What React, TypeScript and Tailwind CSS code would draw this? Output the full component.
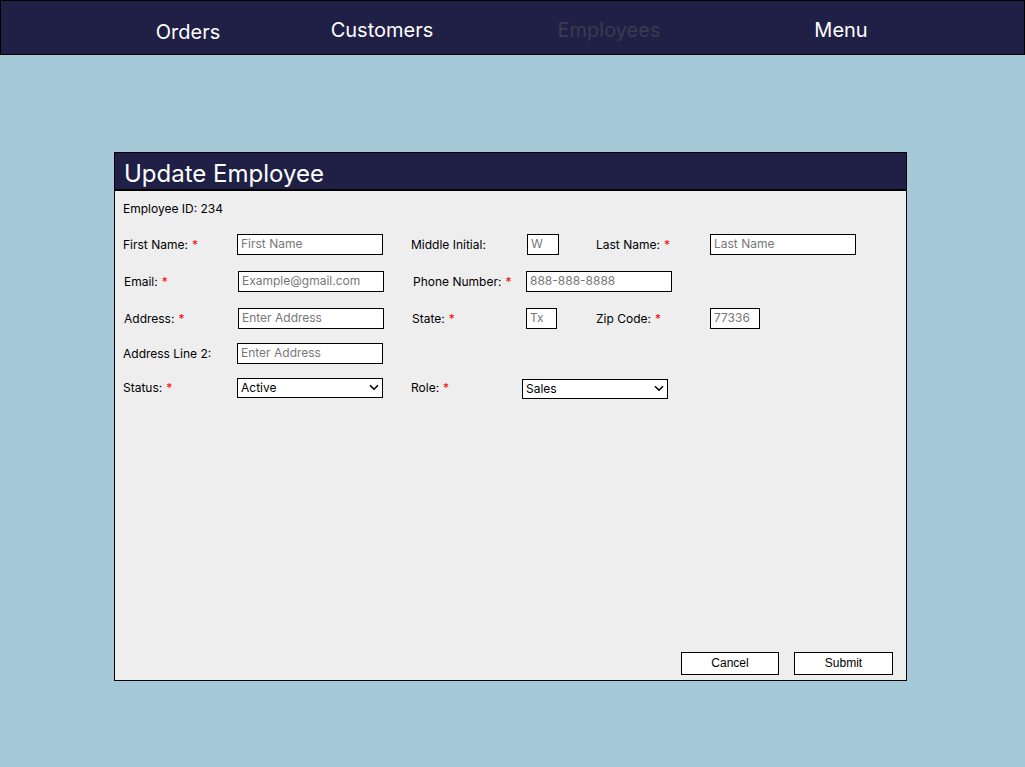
import React from "react";

const F = { fontFamily: "Inter, 'Noto Sans', sans-serif" };

function Label({ text, req, w, ml = 0 }: { text: string; req?: boolean; w: number; ml?: number }) {
  return (
    <div className="text-[12px] text-black shrink-0" style={{ width: w, marginLeft: ml }}>
      {text}
      {req && <span className="text-[#ff0000] ml-[4px]">*</span>}
    </div>
  );
}

function Input({ ph, w }: { ph: string; w: number }) {
  return (
    <input
      placeholder={ph}
      className="h-[21px] border border-black bg-white px-[3px] pb-[2px] text-[12px] text-black placeholder:text-[#777] outline-none shrink-0"
      style={{ width: w, ...F }}
    />
  );
}

function Select({ val, w, opts }: { val: string; w: number; opts: string[] }) {
  return (
    <div className="relative shrink-0" style={{ width: w }}>
      <select
        defaultValue={val}
        className="appearance-none block w-full h-[20px] border border-black bg-white pl-[3px] pb-[1px] text-[12px] text-black outline-none"
        style={F}
      >
        {opts.map((o) => (
          <option key={o}>{o}</option>
        ))}
      </select>
      <svg
        className="absolute right-[4px] top-[6px] pointer-events-none"
        width="10"
        height="7"
        viewBox="0 0 10 7"
        fill="none"
      >
        <path d="M1 1.2 L5 5.2 L9 1.2" stroke="black" strokeWidth="1.6" />
      </svg>
    </div>
  );
}

export default function App() {
  return (
    <div className="w-[1025px] h-[767px] bg-[#a5c9d9] overflow-hidden" style={F}>
      <nav className="h-[55px] bg-[#201f45] border border-black flex items-center pt-[4px] text-[20px]">
        <div className="w-[120px] ml-[127px] text-center text-white mt-[4px]">Orders</div>
        <div className="w-[120px] ml-[74px] text-center text-white">Customers</div>
        <div className="w-[120px] ml-[107px] text-center text-[#3b3b50]">Employees</div>
        <div className="w-[120px] ml-[112px] text-center text-white">Menu</div>
      </nav>
      <div className="ml-[114px] mt-[97px] w-[793px] h-[529px] border border-black bg-[#eeeeee] flex flex-col">
        <div className="h-[38px] bg-[#201f45] border-b-2 border-black flex items-center pl-[9px] pt-[5px] text-[24px] text-white">
          Update Employee
        </div>
        <div className="pl-[8px] pt-[9px] text-[12px] text-black">Employee ID: 234</div>
        <div className="flex items-center pl-[8px] mt-[16px]">
          <Label text="First Name:" req w={114} />
          <Input ph="First Name" w={146} />
          <Label text="Middle Initial:" w={116} ml={28} />
          <Input ph="W" w={32} />
          <Label text="Last Name:" req w={114} ml={37} />
          <Input ph="Last Name" w={146} />
        </div>
        <div className="flex items-center pl-[9px] mt-[16px]">
          <Label text="Email:" req w={114} />
          <Input ph="Example@gmail.com" w={146} />
          <Label text="Phone Number:" req w={113} ml={29} />
          <Input ph="888-888-8888" w={146} />
        </div>
        <div className="flex items-center pl-[9px] mt-[16px]">
          <Label text="Address:" req w={114} />
          <Input ph="Enter Address" w={146} />
          <Label text="State:" req w={114} ml={28} />
          <Input ph="Tx" w={31} />
          <Label text="Zip Code:" req w={114} ml={39} />
          <Input ph="77336" w={50} />
        </div>
        <div className="flex items-center pl-[8px] mt-[14px]">
          <Label text="Address Line 2:" w={114} />
          <Input ph="Enter Address" w={146} />
        </div>
        <div className="flex items-center pl-[8px] mt-[12px]">
          <Label text="Status:" req w={114} />
          <Select val="Active" w={146} opts={["Active", "Inactive"]} />
          <Label text="Role:" req w={111} ml={28} />
          <div className="mt-[3px]">
            <Select val="Sales" w={146} opts={["Sales", "Manager"]} />
          </div>
        </div>
        <div className="mt-auto flex justify-end gap-[15px] pr-[13px] pb-[5px]">
          <button
            className="w-[98px] h-[23px] border border-black bg-white pb-[1px] text-[12px] text-black"
            style={{ fontFamily: "'Liberation Sans', Arial, sans-serif" }}
          >
            Cancel
          </button>
          <button
            className="w-[99px] h-[23px] border border-black bg-white pb-[1px] text-[12px] text-black"
            style={{ fontFamily: "'Liberation Sans', Arial, sans-serif" }}
          >
            Submit
          </button>
        </div>
      </div>
    </div>
  );
}
